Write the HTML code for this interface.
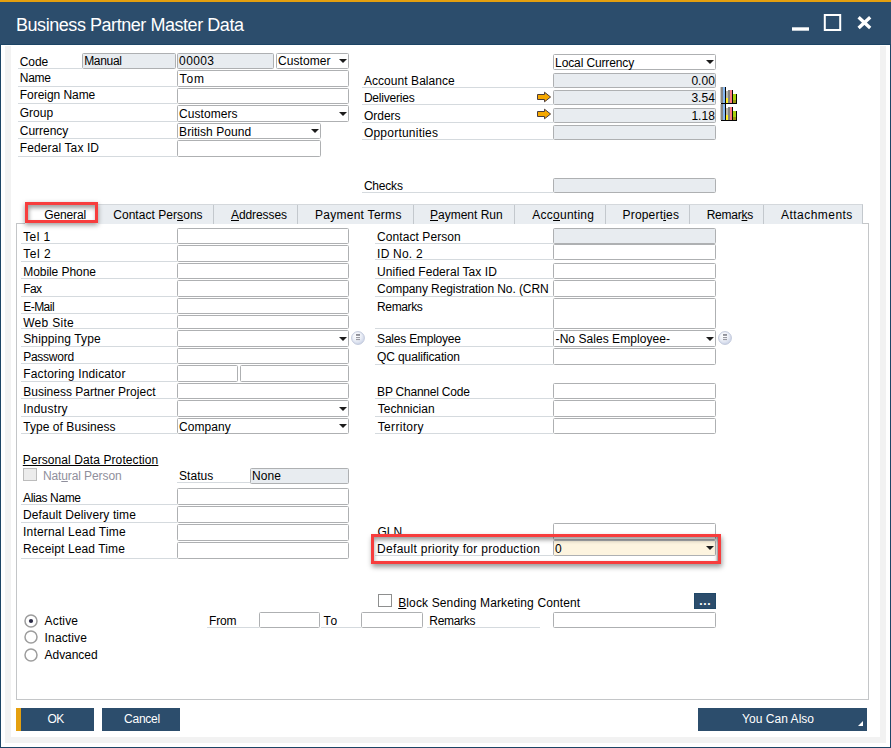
<!DOCTYPE html>
<html><head><meta charset="utf-8"><title>Business Partner Master Data</title>
<style>
html,body{margin:0;padding:0;}
body{width:891px;height:748px;overflow:hidden;background:#fff;font-family:"Liberation Sans", sans-serif;font-size:12px;color:#000;position:relative;}
#win{position:absolute;left:0;top:0;width:889px;height:746px;border:1px solid #1d4566;background:#fff;}
#frame{position:absolute;left:5px;top:46px;width:869px;height:691px;border:6px solid #f2f2f2;border-top-width:0;}
#orange{position:absolute;left:0;top:0;width:891px;height:2px;background:#e5a00f;}
#title{position:absolute;left:0;top:2px;width:891px;height:42px;background:#2c4d6c;border-bottom:1px solid #1c4464;}
#title span{position:absolute;left:16px;top:16px;font-size:18px;line-height:14px;color:#fff;letter-spacing:-0.45px;white-space:nowrap;}
#panel{position:absolute;left:16px;top:223px;width:851px;height:475px;border:1px solid #c4c6c8;background:#fff;}
#tabs{position:absolute;left:25px;top:204px;height:19px;width:837px;background:#e9edf1;border-top:1px solid #d4d8dc;border-right:1px solid #c3c8cd;}
#tabs i{position:absolute;top:0;width:1px;height:19px;background:#c3c8cd;}
#gen{position:absolute;left:25px;top:202px;width:73px;height:22px;background:#fff;}
.ul{position:absolute;height:1px;}
.t{position:absolute;white-space:nowrap;line-height:14px;height:14px;}
.fd{position:absolute;border:1px solid #aeb0b2;border-radius:1.5px;}
.ar{position:absolute;right:1.5px;top:50%;margin-top:-2px;width:0;height:0;border-left:4px solid transparent;border-right:4px solid transparent;border-top:4.5px solid #1c1c1c;}
.ab{position:absolute;}
.cb{position:absolute;width:11.5px;height:11px;border:1px solid #8e8f8f;background:#fff;}
.cb.dis{background:#ececec;border-color:#bcbcbc;}
.rd{position:absolute;width:11px;height:11px;border:1.3px solid #999;border-radius:50%;background:#fff;}
.rd i{position:absolute;left:3.5px;top:3.5px;width:4px;height:4px;border-radius:50%;background:#2b2b45;}
.dots{position:absolute;width:20px;height:14px;background:#2c4d6c;border:1px solid #204868;}
.lk{position:absolute;width:12px;height:12px;border:1px solid #c3cbdc;border-radius:50%;background:radial-gradient(circle at 35% 35%,#fff 0,#eef1f8 45%,#d3dbec 100%);}
.lk i{position:absolute;left:4px;top:2px;width:4px;height:2px;background:#8a8c94;box-shadow:0 3px 0 -0.5px #999,0 5px 0 -0.5px #999;}
.btn{position:absolute;top:708px;height:23px;background:#2c4d6c;}
.red{position:absolute;border:3px solid #f73d3d;box-shadow:0 2px 5px rgba(0,0,0,.4), inset 1px 3px 4px rgba(0,0,0,.38);}
</style></head><body>
<div id="win"></div>
<div id="frame"></div>
<div id="orange"></div>
<div id="title"><span>Business Partner Master Data</span>
<svg style="position:absolute;left:780px;top:0" width="100" height="42" viewBox="0 0 100 42">
<rect x="12" y="25.3" width="17" height="3.4" fill="#fff"/>
<rect x="44.8" y="13" width="15.4" height="15" fill="none" stroke="#fff" stroke-width="2"/>
<path d="M78.6 15.2 L90.2 26 M90.2 15.2 L78.6 26" stroke="#fff" stroke-width="3.3" fill="none"/>
</svg>
</div>
<div id="panel"></div>
<div id="tabs"><i style="left:188px"></i><i style="left:272px"></i><i style="left:388px"></i><i style="left:489px"></i><i style="left:580px"></i><i style="left:664px"></i><i style="left:738px"></i></div>
<div id="gen"></div>
<div class="btn" style="left:16px;width:78px"><i style="position:absolute;left:0;top:0;width:5px;height:23px;background:#e5a00f"></i></div>
<div class="btn" style="left:102px;width:78px"></div>
<div class="btn" style="left:698px;width:169px"><svg style="position:absolute;right:4px;bottom:5px" width="5" height="5"><path d="M5 0V5H0Z" fill="#fff"/></svg></div>
<div class="ul" style="left:18px;top:68px;width:64px;background:#d5dade"></div>
<span class="t" style="left:19.8px;top:55px;letter-spacing:-0.10px;">Code</span>
<div class="fd" style="left:82px;top:53px;width:92px;height:14px;background:#e8ecf0;"></div>
<span class="t" style="left:84.2px;top:54px;letter-spacing:-0.33px;">Manual</span>
<div class="fd" style="left:177px;top:53px;width:95px;height:14px;background:#e8ecf0;"></div>
<span class="t" style="left:179.1px;top:54px;letter-spacing:0.39px;">00003</span>
<div class="fd" style="left:276px;top:53px;width:71px;height:14px;background:#fff;"><i class="ar"></i></div>
<span class="t" style="left:278.1px;top:54px;letter-spacing:0.05px;">Customer</span>
<div class="ul" style="left:18px;top:86px;width:159px;background:#d5dade"></div>
<span class="t" style="left:19.8px;top:71px;letter-spacing:-0.30px;">Name</span>
<div class="fd" style="left:177px;top:70px;width:170px;height:15px;background:#fff;"></div>
<span class="t" style="left:179.6px;top:72px;letter-spacing:0.91px;">Tom</span>
<div class="ul" style="left:18px;top:103px;width:159px;background:#d5dade"></div>
<span class="t" style="left:19.8px;top:88px;letter-spacing:-0.05px;">Foreign Name</span>
<div class="fd" style="left:177px;top:88px;width:170px;height:14px;background:#fff;"></div>
<div class="ul" style="left:18px;top:121px;width:159px;background:#d5dade"></div>
<span class="t" style="left:19.8px;top:106px;letter-spacing:-0.01px;">Group</span>
<div class="fd" style="left:177px;top:105px;width:170px;height:15px;background:#fff;"><i class="ar"></i></div>
<span class="t" style="left:179.1px;top:107px;letter-spacing:0.05px;">Customers</span>
<div class="ul" style="left:18px;top:138px;width:159px;background:#d5dade"></div>
<span class="t" style="left:19.8px;top:124px;letter-spacing:-0.02px;">Currency</span>
<div class="fd" style="left:177px;top:123px;width:142px;height:14px;background:#fff;"><i class="ar"></i></div>
<span class="t" style="left:179.1px;top:125px;letter-spacing:0.05px;">British Pound</span>
<div class="ul" style="left:18px;top:156px;width:159px;background:#d5dade"></div>
<span class="t" style="left:19.8px;top:141px;letter-spacing:0.11px;">Federal Tax ID</span>
<div class="fd" style="left:177px;top:140px;width:142px;height:15px;background:#fff;"></div>
<div class="fd" style="left:553px;top:54px;width:161px;height:14px;background:#fff;"><i class="ar"></i></div>
<span class="t" style="left:555.1px;top:56px;letter-spacing:-0.12px;">Local Currency</span>
<div class="ul" style="left:362px;top:87px;width:191px;background:#d5dade"></div>
<span class="t" style="left:363.9px;top:74px;letter-spacing:0.06px;">Account Balance</span>
<div class="fd" style="left:553px;top:73px;width:161px;height:13px;background:#e8ecf0;"></div>
<span class="t" style="left:691.4px;top:74px;letter-spacing:0.05px;">0.00</span>
<div class="ul" style="left:362px;top:104px;width:191px;background:#d5dade"></div>
<span class="t" style="left:363.9px;top:91px;letter-spacing:-0.21px;">Deliveries</span>
<div class="fd" style="left:553px;top:90px;width:161px;height:13px;background:#e8ecf0;"></div>
<span class="t" style="left:691.4px;top:91px;letter-spacing:0.05px;">3.54</span>
<div class="ul" style="left:362px;top:122px;width:191px;background:#d5dade"></div>
<span class="t" style="left:363.9px;top:109px;letter-spacing:0.00px;">Orders</span>
<div class="fd" style="left:553px;top:108px;width:161px;height:13px;background:#e8ecf0;"></div>
<span class="t" style="left:691.4px;top:109px;letter-spacing:0.05px;">1.18</span>
<div class="ul" style="left:362px;top:139px;width:191px;background:#d5dade"></div>
<span class="t" style="left:363.9px;top:126px;letter-spacing:0.23px;">Opportunities</span>
<div class="fd" style="left:553px;top:125px;width:161px;height:13px;background:#e8ecf0;"></div>
<div class="ul" style="left:362px;top:192px;width:191px;background:#d5dade"></div>
<span class="t" style="left:363.9px;top:179px;letter-spacing:-0.20px;">Checks</span>
<div class="fd" style="left:553px;top:178px;width:161px;height:13px;background:#e8ecf0;"></div>
<div class="ul" style="left:21px;top:243px;width:156px;background:#d5dade"></div>
<span class="t" style="left:23.2px;top:230px;letter-spacing:0.43px;">Tel 1</span>
<div class="fd" style="left:177px;top:228px;width:170px;height:14px;background:#fff;"></div>
<div class="ul" style="left:21px;top:261px;width:156px;background:#d5dade"></div>
<span class="t" style="left:23.2px;top:247px;letter-spacing:0.53px;">Tel 2</span>
<div class="fd" style="left:177px;top:245px;width:170px;height:15px;background:#fff;"></div>
<div class="ul" style="left:21px;top:278px;width:156px;background:#d5dade"></div>
<span class="t" style="left:23.2px;top:265px;letter-spacing:-0.05px;">Mobile Phone</span>
<div class="fd" style="left:177px;top:263px;width:170px;height:14px;background:#fff;"></div>
<div class="ul" style="left:21px;top:296px;width:156px;background:#d5dade"></div>
<span class="t" style="left:23.2px;top:282px;letter-spacing:-0.54px;">Fax</span>
<div class="fd" style="left:177px;top:280px;width:170px;height:15px;background:#fff;"></div>
<div class="ul" style="left:21px;top:313px;width:156px;background:#d5dade"></div>
<span class="t" style="left:23.2px;top:300px;letter-spacing:-0.52px;">E-Mail</span>
<div class="fd" style="left:177px;top:298px;width:170px;height:14px;background:#fff;"></div>
<div class="ul" style="left:21px;top:328px;width:156px;background:#d5dade"></div>
<span class="t" style="left:23.2px;top:316px;letter-spacing:0.29px;">Web Site</span>
<div class="fd" style="left:177px;top:315px;width:170px;height:12px;background:#fff;"></div>
<div class="ul" style="left:21px;top:346px;width:156px;background:#d5dade"></div>
<span class="t" style="left:23.2px;top:332px;letter-spacing:0.14px;">Shipping Type</span>
<div class="fd" style="left:177px;top:330px;width:170px;height:15px;background:#fff;"><i class="ar"></i></div>
<div class="ul" style="left:21px;top:363px;width:156px;background:#d5dade"></div>
<span class="t" style="left:23.2px;top:350px;letter-spacing:-0.26px;">Password</span>
<div class="fd" style="left:177px;top:348px;width:170px;height:14px;background:#fff;"></div>
<div class="ul" style="left:21px;top:381px;width:156px;background:#d5dade"></div>
<span class="t" style="left:23.2px;top:367px;letter-spacing:0.16px;">Factoring Indicator</span>
<div class="fd" style="left:177px;top:365px;width:59px;height:15px;background:#fff;"></div>
<div class="fd" style="left:240px;top:365px;width:107px;height:15px;background:#fff;"></div>
<div class="ul" style="left:21px;top:398px;width:156px;background:#d5dade"></div>
<span class="t" style="left:23.2px;top:385px;letter-spacing:0.01px;">Business Partner Project</span>
<div class="fd" style="left:177px;top:383px;width:170px;height:14px;background:#fff;"></div>
<div class="ul" style="left:21px;top:416px;width:156px;background:#d5dade"></div>
<span class="t" style="left:23.2px;top:402px;letter-spacing:0.25px;">Industry</span>
<div class="fd" style="left:177px;top:400px;width:170px;height:15px;background:#fff;"><i class="ar"></i></div>
<div class="ul" style="left:21px;top:433px;width:156px;background:#d5dade"></div>
<span class="t" style="left:23.2px;top:420px;letter-spacing:0.06px;">Type of Business</span>
<div class="fd" style="left:177px;top:418px;width:170px;height:14px;background:#fff;"><i class="ar"></i></div>
<span class="t" style="left:179.1px;top:420px;letter-spacing:0.06px;">Company</span>
<span class="t" style="left:22.8px;top:453px;letter-spacing:0.09px;text-decoration:underline;text-underline-offset:1px;">Personal Data Protection</span>
<div class="cb dis" style="left:23px;top:468px"></div>
<span class="t" style="left:42.9px;top:469px;letter-spacing:-0.10px;color:#8f8f9c;">Nat<u>u</u>ral Person</span>
<span class="t" style="left:179.0px;top:469px;letter-spacing:0.05px;">Status</span>
<div class="ul" style="left:177px;top:482px;width:73px;background:#d5dade"></div>
<div class="fd" style="left:250px;top:468px;width:97px;height:14px;background:#e8ecf0;"></div>
<span class="t" style="left:252.1px;top:469px;letter-spacing:0.06px;">None</span>
<div class="ul" style="left:21px;top:504px;width:156px;background:#d5dade"></div>
<span class="t" style="left:23.0px;top:491px;letter-spacing:-0.37px;">Alias Name</span>
<div class="fd" style="left:177px;top:488px;width:170px;height:15px;background:#fff;"></div>
<div class="ul" style="left:21px;top:522px;width:156px;background:#d5dade"></div>
<span class="t" style="left:23.0px;top:508px;letter-spacing:0.11px;">Default Delivery time</span>
<div class="fd" style="left:177px;top:506px;width:170px;height:15px;background:#fff;"></div>
<span class="t" style="left:23.0px;top:525px;letter-spacing:0.19px;">Internal Lead Time</span>
<div class="fd" style="left:177px;top:524px;width:170px;height:15px;background:#fff;"></div>
<div class="ul" style="left:21px;top:558px;width:156px;background:#d5dade"></div>
<span class="t" style="left:23.0px;top:542px;letter-spacing:0.11px;">Receipt Lead Time</span>
<div class="fd" style="left:177px;top:542px;width:170px;height:15px;background:#fff;"></div>
<div class="ul" style="left:375px;top:243px;width:178px;background:#d5dade"></div>
<span class="t" style="left:377.1px;top:230px;letter-spacing:0.07px;">Contact Person</span>
<div class="fd" style="left:553px;top:228px;width:161px;height:14px;background:#e8ecf0;"></div>
<div class="ul" style="left:375px;top:259px;width:178px;background:#d5dade"></div>
<span class="t" style="left:377.1px;top:247px;letter-spacing:0.21px;">ID No. 2</span>
<div class="fd" style="left:553px;top:244px;width:161px;height:14px;background:#fff;"></div>
<div class="ul" style="left:375px;top:278px;width:178px;background:#d5dade"></div>
<span class="t" style="left:377.1px;top:265px;letter-spacing:0.06px;">Unified Federal Tax ID</span>
<div class="fd" style="left:553px;top:263px;width:161px;height:14px;background:#fff;"></div>
<div class="ul" style="left:375px;top:296px;width:178px;background:#d5dade"></div>
<span class="t" style="left:377.1px;top:282px;letter-spacing:-0.09px;">Company Registration No. (CRN</span>
<div class="fd" style="left:553px;top:280px;width:161px;height:15px;background:#fff;"></div>
<div class="ul" style="left:375px;top:328px;width:178px;background:#d5dade"></div>
<span class="t" style="left:377.1px;top:300px;letter-spacing:-0.39px;">Remarks</span>
<div class="fd" style="left:553px;top:298px;width:161px;height:29px;background:#fff;"></div>
<div class="ul" style="left:375px;top:346px;width:178px;background:#d5dade"></div>
<span class="t" style="left:377.1px;top:332px;letter-spacing:-0.22px;">Sales Employee</span>
<div class="fd" style="left:553px;top:330px;width:161px;height:15px;background:#fff;"><i class="ar"></i></div>
<span class="t" style="left:555.6px;top:332px;letter-spacing:0.05px;">-No Sales Employee-</span>
<div class="ul" style="left:375px;top:364px;width:178px;background:#d5dade"></div>
<span class="t" style="left:377.1px;top:350px;letter-spacing:-0.13px;">QC qualification</span>
<div class="fd" style="left:553px;top:348px;width:161px;height:15px;background:#fff;"></div>
<div class="ul" style="left:375px;top:398px;width:178px;background:#d5dade"></div>
<span class="t" style="left:377.1px;top:385px;letter-spacing:-0.22px;">BP Channel Code</span>
<div class="fd" style="left:553px;top:383px;width:161px;height:14px;background:#fff;"></div>
<div class="ul" style="left:375px;top:416px;width:178px;background:#d5dade"></div>
<span class="t" style="left:377.8px;top:402px;letter-spacing:0.01px;">Technician</span>
<div class="fd" style="left:553px;top:400px;width:161px;height:15px;background:#fff;"></div>
<div class="ul" style="left:375px;top:433px;width:178px;background:#d5dade"></div>
<span class="t" style="left:377.8px;top:420px;letter-spacing:0.31px;">Territory</span>
<div class="fd" style="left:553px;top:418px;width:161px;height:14px;background:#fff;"></div>
<span class="t" style="left:377.4px;top:525px;letter-spacing:0.07px;">GLN</span>
<div class="fd" style="left:553px;top:523px;width:161px;height:15px;background:#fff;"></div>
<div class="ul" style="left:375px;top:555px;width:178px;background:#d5dade"></div>
<span class="t" style="left:377.1px;top:542px;letter-spacing:0.29px;">Default priority for production</span>
<div class="fd" style="left:553px;top:540px;width:161px;height:14px;background:#fdf4df;"><i class="ar"></i></div>
<span class="t" style="left:555.1px;top:542px;letter-spacing:0.06px;">0</span>
<svg class="ab" style="left:351px;top:331px" width="14" height="14" viewBox="0 0 14 14"><defs><radialGradient id="g351" cx="40%" cy="35%" r="65%"><stop offset="0" stop-color="#fff"/><stop offset="0.5" stop-color="#eef1f8"/><stop offset="1" stop-color="#cdd5e8"/></radialGradient></defs><circle cx="7" cy="7" r="6.4" fill="url(#g351)" stroke="#c2c9db" stroke-width="1"/><rect x="5" y="3.1" width="4" height="1.7" fill="#85878f"/><rect x="5" y="6.1" width="4" height="1" fill="#8f9198"/><rect x="5" y="8.1" width="4" height="1" fill="#8f9198"/></svg>
<svg class="ab" style="left:718px;top:331px" width="14" height="14" viewBox="0 0 14 14"><defs><radialGradient id="g718" cx="40%" cy="35%" r="65%"><stop offset="0" stop-color="#fff"/><stop offset="0.5" stop-color="#eef1f8"/><stop offset="1" stop-color="#cdd5e8"/></radialGradient></defs><circle cx="7" cy="7" r="6.4" fill="url(#g718)" stroke="#c2c9db" stroke-width="1"/><rect x="5" y="3.1" width="4" height="1.7" fill="#85878f"/><rect x="5" y="6.1" width="4" height="1" fill="#8f9198"/><rect x="5" y="8.1" width="4" height="1" fill="#8f9198"/></svg>
<svg class="ab" style="left:536px;top:91px" width="16" height="12" viewBox="0 0 16 12"><path d="M1.5 3.5H8.5V1.2L14.6 6L8.5 10.8V8.5H1.5Z" fill="#f5a800" stroke="#4a3c3c" stroke-width="1"/></svg>
<svg class="ab" style="left:536px;top:108px" width="16" height="12" viewBox="0 0 16 12"><path d="M1.5 3.5H8.5V1.2L14.6 6L8.5 10.8V8.5H1.5Z" fill="#f5a800" stroke="#4a3c3c" stroke-width="1"/></svg>
<svg class="ab" style="left:720px;top:87px" width="18" height="17" viewBox="0 0 18 17" shape-rendering="crispEdges">
<rect x="0" y="0" width="1" height="16" fill="#c9c9c4"/><rect x="1" y="0" width="2" height="16" fill="#868686"/><rect x="3" y="0" width="2" height="16" fill="#86b9f2"/><rect x="5" y="0" width="1" height="16" fill="#050505"/>
<rect x="6" y="4" width="2" height="7" fill="#bdbcae"/><rect x="6" y="11" width="2" height="5" fill="#fff02a"/>
<rect x="8" y="3" width="2" height="13" fill="#858585"/><rect x="10" y="3" width="2" height="13" fill="#ff7b80"/><rect x="12" y="3" width="1" height="13" fill="#050505"/>
<rect x="13" y="7" width="3" height="6" fill="#a6d20f"/><rect x="13" y="13" width="3" height="3" fill="#98980f"/><rect x="16" y="7" width="1" height="9" fill="#050505"/>
<rect x="1" y="16" width="16" height="1" fill="#050505"/></svg>
<svg class="ab" style="left:720px;top:104px" width="18" height="17" viewBox="0 0 18 17" shape-rendering="crispEdges">
<rect x="0" y="0" width="1" height="16" fill="#c9c9c4"/><rect x="1" y="0" width="2" height="16" fill="#868686"/><rect x="3" y="0" width="2" height="16" fill="#86b9f2"/><rect x="5" y="0" width="1" height="16" fill="#050505"/>
<rect x="6" y="4" width="2" height="7" fill="#bdbcae"/><rect x="6" y="11" width="2" height="5" fill="#fff02a"/>
<rect x="8" y="3" width="2" height="13" fill="#858585"/><rect x="10" y="3" width="2" height="13" fill="#ff7b80"/><rect x="12" y="3" width="1" height="13" fill="#050505"/>
<rect x="13" y="7" width="3" height="6" fill="#a6d20f"/><rect x="13" y="13" width="3" height="3" fill="#98980f"/><rect x="16" y="7" width="1" height="9" fill="#050505"/>
<rect x="1" y="16" width="16" height="1" fill="#050505"/></svg>
<div class="cb" style="left:378px;top:594px"></div>
<span class="t" style="left:398.2px;top:596px;letter-spacing:0.13px;"><u>B</u>lock Sending Marketing Content</span>
<div class="dots" style="left:694px;top:593px"></div><span class="t" style="left:699.3px;top:594px;letter-spacing:0.67px;color:#fff;font-weight:bold">...</span>
<svg class="ab" style="left:22.8px;top:612.7px" width="16" height="16" viewBox="0 0 16 16"><circle cx="8" cy="8" r="6" fill="#fff" stroke="#9d9d9d" stroke-width="1.5"/><circle cx="8" cy="8" r="2.1" fill="#2b2b45"/></svg>
<span class="t" style="left:44.6px;top:614px;letter-spacing:0.14px;">Active</span>
<svg class="ab" style="left:22.8px;top:628.9px" width="16" height="16" viewBox="0 0 16 16"><circle cx="8" cy="8" r="6" fill="#fff" stroke="#9d9d9d" stroke-width="1.5"/></svg>
<span class="t" style="left:44.6px;top:631px;letter-spacing:0.14px;">Inactive</span>
<svg class="ab" style="left:22.8px;top:647.1px" width="16" height="16" viewBox="0 0 16 16"><circle cx="8" cy="8" r="6" fill="#fff" stroke="#9d9d9d" stroke-width="1.5"/></svg>
<span class="t" style="left:44.6px;top:648px;letter-spacing:-0.05px;">Advanced</span>
<div class="ul" style="left:207px;top:627px;width:52px;background:#d5dade"></div>
<span class="t" style="left:209.0px;top:614px;letter-spacing:-0.15px;">From</span>
<div class="fd" style="left:259px;top:612px;width:59px;height:14px;background:#fff;"></div>
<div class="ul" style="left:321px;top:627px;width:40px;background:#d5dade"></div>
<span class="t" style="left:323.6px;top:614px;letter-spacing:0.91px;">To</span>
<div class="fd" style="left:361px;top:612px;width:60px;height:14px;background:#fff;"></div>
<div class="ul" style="left:427px;top:627px;width:113px;background:#d5dade"></div>
<span class="t" style="left:429.3px;top:614px;letter-spacing:-0.30px;">Remarks</span>
<div class="fd" style="left:553px;top:612px;width:161px;height:14px;background:#fff;"></div>
<span class="t" style="left:44.2px;top:208px;letter-spacing:-0.13px;">General</span>
<span class="t" style="left:113.2px;top:208px;letter-spacing:0.05px;">Contact Per<u>s</u>ons</span>
<span class="t" style="left:231.0px;top:208px;letter-spacing:-0.09px;"><u>A</u>ddresses</span>
<span class="t" style="left:314.9px;top:208px;letter-spacing:0.28px;">Payment Terms</span>
<span class="t" style="left:430.0px;top:208px;letter-spacing:-0.00px;"><u>P</u>ayment Run</span>
<span class="t" style="left:532.3px;top:208px;letter-spacing:0.25px;">Acc<u>o</u>unting</span>
<span class="t" style="left:622.5px;top:208px;letter-spacing:0.19px;">Propert<u>i</u>es</span>
<span class="t" style="left:706.7px;top:208px;letter-spacing:-0.23px;">Remar<u>k</u>s</span>
<span class="t" style="left:781.1px;top:208px;letter-spacing:0.45px;">Attachments</span>
<span class="t" style="left:47.6px;top:712px;letter-spacing:-0.80px;color:#fff;">OK</span>
<span class="t" style="left:124.1px;top:712px;letter-spacing:-0.26px;color:#fff;">Cancel</span>
<span class="t" style="left:742.1px;top:712px;letter-spacing:0.03px;color:#fff;">You Can Also</span>
<div class="red" style="left:25px;top:202px;width:67px;height:15px"></div>
<div class="red" style="left:371px;top:534px;width:344px;height:24px;box-shadow:1px 3px 5px rgba(0,0,0,.4), inset 0 3px 4px rgba(0,0,0,.38), inset -2px 0 2px -1px rgba(0,0,0,.3)"></div>
</body></html>
